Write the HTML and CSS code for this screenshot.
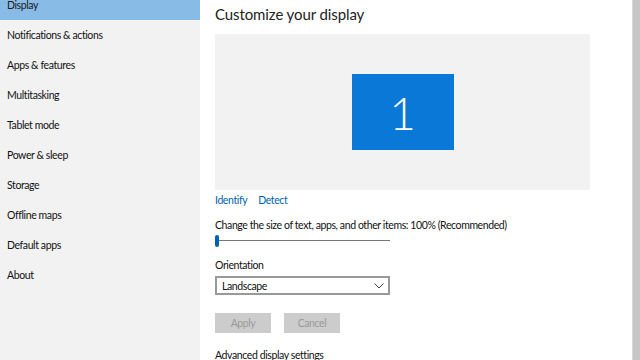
FILE: index.html
```html
<!DOCTYPE html>
<html lang="en">
<head>
  <meta charset="UTF-8">
  <title>Display settings</title>
  <link rel="stylesheet" href="styles.css">
</head>
<body>
  <nav class="sidebar">
    <div class="nav-item selected">Display</div>
    <div class="nav-item">Notifications &amp; actions</div>
    <div class="nav-item">Apps &amp; features</div>
    <div class="nav-item">Multitasking</div>
    <div class="nav-item">Tablet mode</div>
    <div class="nav-item">Power &amp; sleep</div>
    <div class="nav-item">Storage</div>
    <div class="nav-item">Offline maps</div>
    <div class="nav-item">Default apps</div>
    <div class="nav-item">About</div>
  </nav>

  <main class="content">
    <h1>Customize your display</h1>

    <div class="preview">
      <div class="monitor">1</div>
    </div>

    <div class="links">
      <a href="#">Identify</a>
      <a href="#">Detect</a>
    </div>

    <p class="label">Change the size of text, apps, and other items: 100% (Recommended)</p>
    <div class="slider">
      <div class="thumb"></div>
    </div>

    <p class="label orient">Orientation</p>
    <div class="dropdown">
      <span>Landscape</span>
      <svg width="10" height="6" viewBox="0 0 10 6"><path d="M0.5 0.5 L5 5 L9.5 0.5" fill="none" stroke="#444" stroke-width="1"/></svg>
    </div>

    <div class="buttons">
      <button disabled>Apply</button>
      <button disabled>Cancel</button>
    </div>

    <p class="label advanced">Advanced display settings</p>
  </main>

  <div class="scrollbar"></div>
</body>
</html>
```

FILE: styles.css
```css
body {
  margin: 0;
  width: 640px;
  height: 360px;
  overflow: hidden;
  display: flex;
  font-family: 'Lato', 'Open Sans', sans-serif;
  font-size: 10.5px;
  letter-spacing: -0.4px;
  color: #111;
  background: #fff;
}

.sidebar {
  width: 200px;
  flex-shrink: 0;
  background: #f2f2f2;
}

.nav-item {
  height: 30px;
  line-height: 30px;
  padding-left: 7px;
}

.nav-item.selected {
  margin-top: -10px;
  background: #89bbe7;
  color: #1a1a1a;
}

.content {
  flex: 1;
  padding: 0 15px;
}

h1 {
  margin: 4px 0 0;
  font-size: 15px;
  font-weight: normal;
  letter-spacing: -0.1px;
  line-height: 20px;
  color: #222;
}

.preview {
  margin-top: 10px;
  width: 375px;
  height: 156px;
  background: #f2f2f2;
  display: flex;
  justify-content: center;
  align-items: center;
}

.monitor {
  width: 102px;
  height: 76px;
  background: #0a78d7;
  color: #fff;
  font-weight: 300;
  font-size: 46px;
  letter-spacing: 0;
  display: flex;
  justify-content: center;
  align-items: center;
}

.links {
  margin-top: 3px;
  height: 14px;
  line-height: 14px;
  display: flex;
  gap: 11px;
}

.links a {
  color: #0063b1;
  text-decoration: none;
}

.label {
  margin: 0;
  line-height: 14px;
}

.links + .label {
  margin-top: 11px;
}

.slider {
  position: relative;
  margin-top: 3px;
  width: 175px;
  height: 12px;
}

.slider::before {
  content: "";
  position: absolute;
  left: 0;
  right: 0;
  top: 5px;
  height: 1px;
  background: #777;
}

.thumb {
  position: absolute;
  left: 0;
  top: 0;
  width: 4px;
  height: 12px;
  border-radius: 2px;
  background: #0063b1;
}

.orient {
  margin-top: 11px;
}

.dropdown {
  margin-top: 4px;
  width: 166px;
  height: 15px;
  border: 2px solid #999;
  display: flex;
  align-items: center;
  justify-content: space-between;
  padding-left: 5px;
}

.dropdown svg {
  margin-right: 4px;
}

.buttons {
  margin-top: 18px;
  display: flex;
  gap: 13px;
}

.buttons button {
  width: 56px;
  height: 20px;
  border: none;
  background: #cccccc;
  color: #9a9a9a;
  font-family: inherit;
  font-size: 10.5px;
  letter-spacing: inherit;
  padding: 0;
}

.advanced {
  margin-top: 15px;
}

.scrollbar {
  width: 7px;
  flex-shrink: 0;
  background: #c6c6c6;
  border-left: 1px solid #d8d8d8;
}
```
